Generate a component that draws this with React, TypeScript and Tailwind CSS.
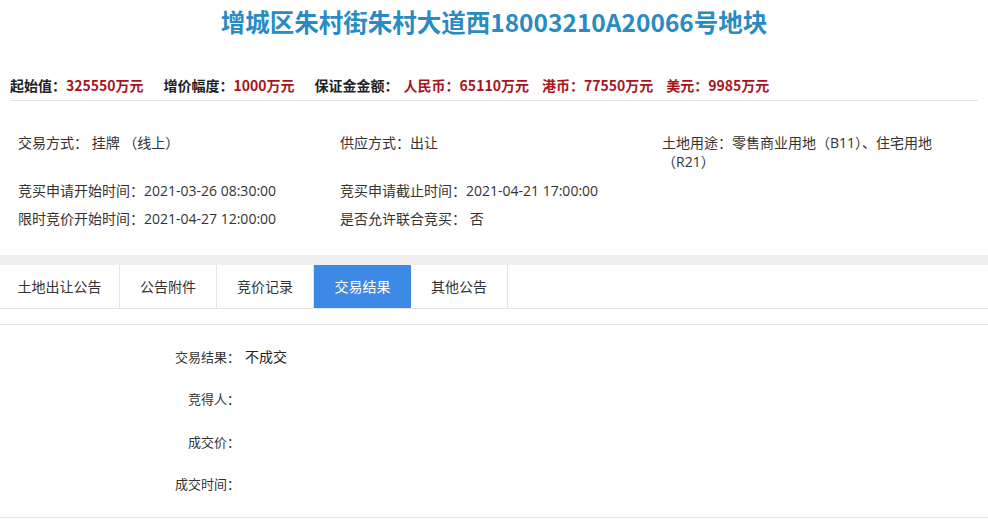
import React from 'react';

const font = { fontFamily: '"Noto Sans CJK SC", "Noto Sans", sans-serif' };
const bodyFont = { fontFamily: '"Open Sans", "Noto Sans CJK SC", sans-serif' };

const prices = [
  { label: '起始值：', value: '325550万元', gap: 'mr-[20px]' },
  { label: '增价幅度：', value: '1000万元', gap: 'mr-[20px]' },
  { label: '保证金金额：', value: '', gap: 'mr-[5px]' },
  { label: '人民币：', value: '65110万元', gap: 'mr-[13px]', red: true },
  { label: '港币：', value: '77550万元', gap: 'mr-[13px]', red: true },
  { label: '美元：', value: '9985万元', gap: '', red: true },
];

const tabs = ['土地出让公告', '公告附件', '竞价记录', '交易结果', '其他公告'];

const results = [
  { label: '交易结果：', value: '不成交' },
  { label: '竞得人：', value: '' },
  { label: '成交价：', value: '' },
  { label: '成交时间：', value: '' },
];

export default function App() {
  return (
    <div className="w-[988px] h-[526px] overflow-hidden bg-white text-[#333]" style={font}>
      {/* Title */}
      <div className="h-[44px] flex items-center justify-center text-[24.5px] font-bold text-[#2a8bc3]">
        增城区朱村街朱村大道西18003210A20066号地块
      </div>

      {/* Prices */}
      <div className="mt-[31px] mx-[10px] pb-[5px] border-b border-[#e2e2e2] h-[26px] flex items-center text-[14px] font-bold leading-[20px]">
        {prices.map((p) => (
          <span key={p.label} className={p.gap}>
            <span className={p.red ? 'text-[#a8141b]' : 'text-[#222]'}>{p.label}</span>
            {p.value && <span className="text-[#a8141b]">{p.value}</span>}
          </span>
        ))}
      </div>

      {/* Info */}
      <div className="pt-[32px] px-[18px] text-[14px] leading-[19px]" style={bodyFont}>
        <div className="grid grid-cols-[322px_322px_285px]">
          <div>交易方式： 挂牌 （线上）</div>
          <div>供应方式：出让</div>
          <div>土地用途：零售商业用地（B11）、住宅用地（R21）</div>
        </div>
        <div className="grid grid-cols-[322px_322px_285px] mt-[10px]">
          <div>竞买申请开始时间：2021-03-26 08:30:00</div>
          <div>竞买申请截止时间：2021-04-21 17:00:00</div>
          <div></div>
        </div>
        <div className="grid grid-cols-[322px_322px_285px] mt-[9px]">
          <div>限时竞价开始时间：2021-04-27 12:00:00</div>
          <div>是否允许联合竞买： 否</div>
          <div></div>
        </div>
      </div>

      <div className="mt-[27px] h-[10px] bg-[#f0f0f0]" />

      {/* Tabs */}
      <div className="h-[44px] flex border-b border-[#e4e4e4] text-[14px]">
        {tabs.map((t, i) => (
          <div
            key={t}
            className={`${i === 0 ? 'w-[120px]' : 'w-[97px]'} ${
              i === 3 ? 'bg-[#3c8ae6] text-white' : 'text-[#333] border-r border-[#e6e6e6]'
            } flex items-center justify-center`}
          >
            {t}
          </div>
        ))}
      </div>

      <div className="h-[16px] border-b border-[#e6e6e6]" />

      {/* Result */}
      <div className="pt-[10px] pb-[12px] border-b border-[#e6e6e6] text-[13px]">
        {results.map((r) => (
          <div key={r.label} className="h-[42.5px] flex items-center">
            <div className="w-[240px] text-right">{r.label}</div>
            <div className="ml-[5px] text-[14px] text-[#222]">{r.value}</div>
          </div>
        ))}
      </div>
    </div>
  );
}
